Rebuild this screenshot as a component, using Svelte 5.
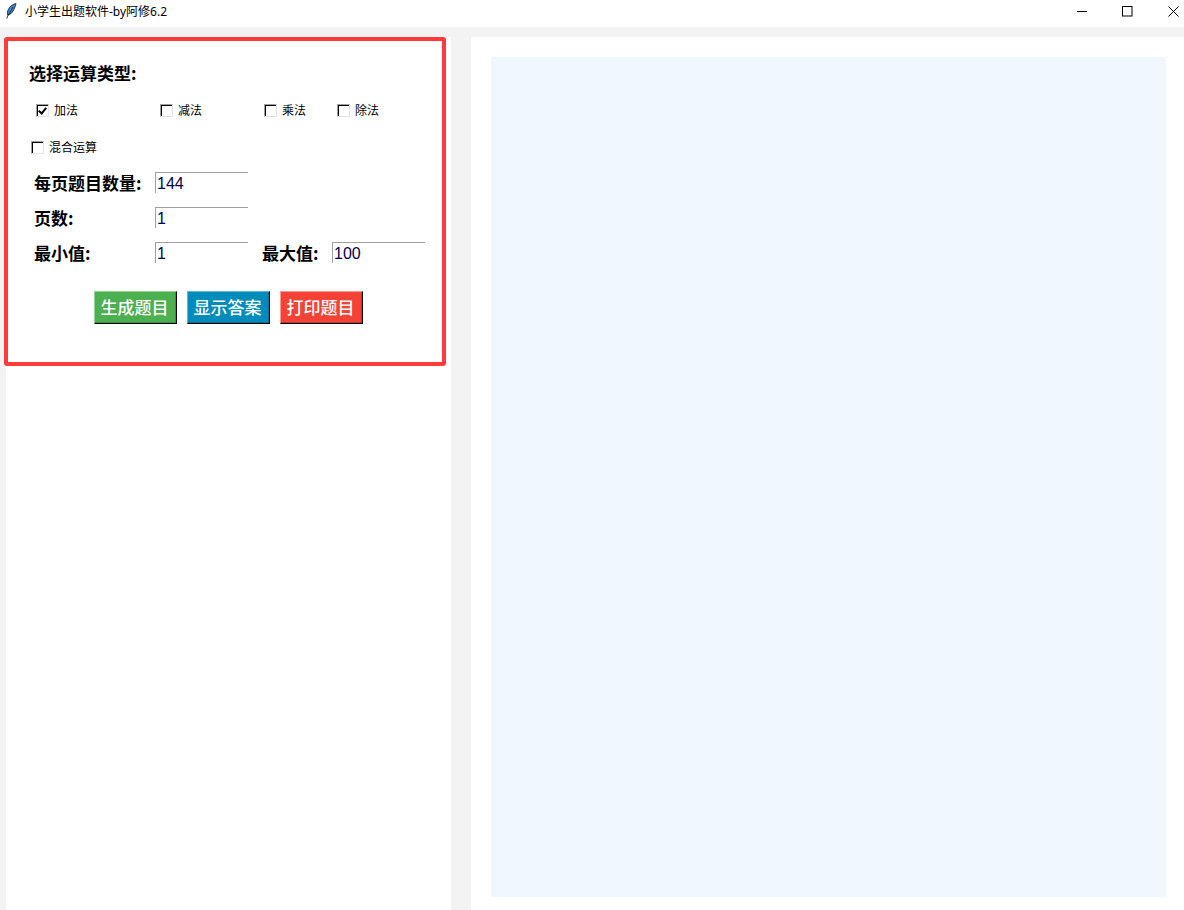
<script>
  // Question generator settings: operation types, page counts and value range.
  const firstRow = [
    { name: '加法', width: 124, checked: true },
    { name: '减法', width: 104, checked: false },
    { name: '乘法', width: 73, checked: false },
    { name: '除法', width: 73, checked: false },
  ];

  let ops = $state(firstRow);
  let mixed = $state(false);
  let perPage = $state('144');
  let pages = $state('1');
  let min = $state('1');
  let max = $state('100');
</script>

<div class="window">
  <header class="titlebar">
    <svg class="feather" width="12" height="16" viewBox="0 0 12 16" aria-hidden="true">
      <path d="M11 0.6C8 1.2 4.6 3.4 3.2 6.8 2.4 8.6 2.2 10.4 2.8 12.2 5 11.8 6.8 10.2 8 8 9.4 5.6 10.6 3 11 0.6Z" fill="#3f86c8" stroke="#12283a" stroke-width="0.9" stroke-linejoin="round" />
      <path d="M8.2 4 2.6 13.2 1.8 15.6" stroke="#12283a" stroke-width="0.9" fill="none" />
    </svg>
    <span class="app-title">小学生出题软件-by阿修6.2</span>
    <div class="controls">
      <svg width="10" height="10" viewBox="0 0 10 10" aria-hidden="true"><path d="M0 5.5H10" stroke="#000" /></svg>
      <svg width="11" height="11" viewBox="0 0 11 11" aria-hidden="true"><rect x="0.5" y="0.5" width="9.5" height="9.5" fill="none" stroke="#000" /></svg>
      <svg width="11" height="11" viewBox="0 0 11 11" aria-hidden="true"><path d="M0.5 0.5 10.5 10.5M10.5 0.5 0.5 10.5" stroke="#000" /></svg>
    </div>
  </header>

  <main class="body">
    <section class="left">
      <div class="frame">
        <h2 class="heading">选择运算类型:</h2>

        <div class="ops">
          {#each ops as op}
            <label class="check" style="width: {op.width}px">
              <input type="checkbox" bind:checked={op.checked} />
              <span>{op.name}</span>
            </label>
          {/each}
        </div>

        <label class="check mixed">
          <input type="checkbox" bind:checked={mixed} />
          <span>混合运算</span>
        </label>

        <div class="fields">
          <div class="row">
            <span class="label">每页题目数量:</span>
            <input class="num" bind:value={perPage} />
          </div>
          <div class="row">
            <span class="label">页数:</span>
            <input class="num" bind:value={pages} />
          </div>
          <div class="row">
            <span class="label">最小值:</span>
            <input class="num" bind:value={min} />
            <span class="label second">最大值:</span>
            <input class="num" bind:value={max} />
          </div>
        </div>

        <div class="actions">
          <button type="button" class="btn green">生成题目</button>
          <button type="button" class="btn blue">显示答案</button>
          <button type="button" class="btn red">打印题目</button>
        </div>
      </div>
    </section>

    <section class="right">
      <div class="sheet"></div>
    </section>
  </main>
</div>

<style>
  :global(body) { margin: 0; background: #f3f3f3; }

  .window {
    width: 1184px; height: 910px; overflow: hidden; display: flex; flex-direction: column;
    font-family: "Noto Sans CJK SC", "Liberation Sans", sans-serif; color: #000;
  }

  .titlebar { height: 27px; flex: none; display: flex; align-items: center; background: #fff; padding-left: 5px; box-sizing: border-box; }
  .feather { flex: none; margin-top: -5px; }
  .app-title { margin-left: 8px; margin-top: -3px; font-size: 12px; line-height: 16px; font-family: "Noto Sans", "Noto Sans CJK SC", sans-serif; }
  .controls { margin-left: auto; display: flex; align-items: flex-start; margin-top: -5px; padding-right: 5px; }
  .controls svg { display: block; }
  .controls svg:nth-child(1) { margin-right: 35px; }
  .controls svg:nth-child(2) { margin-right: 35px; }

  .body { flex: 1; display: flex; padding-top: 10px; padding-left: 6px; gap: 20px; min-height: 0; }

  .left { width: 445px; flex: none; background: #fff; }
  .frame {
    margin-left: -2px; width: 442px; height: 329px; box-sizing: border-box;
    border: 4px solid #ff3b3b; border-radius: 3px; background: #fff;
    padding: 22px 0 0 21px;
  }

  .heading { margin: 0; font-size: 17px; line-height: 20px; font-weight: 700; }

  .ops { display: flex; margin: 19px 0 0 7px; }
  .check { display: flex; align-items: center; gap: 5px; font-size: 12px; line-height: 16px; flex: none; }
  .mixed { margin: 21px 0 0 2px; }

  .check input {
    appearance: none; width: 13px; height: 13px; margin: 0; flex: none; box-sizing: border-box; background: #fff;
    border: 1px solid; border-color: #a0a0a0 #e3e3e3 #e3e3e3 #a0a0a0;
    box-shadow: inset 1px 1px 0 #000; position: relative;
  }
  .check input:checked::after {
    content: ''; position: absolute; left: 3px; top: 1px; width: 3px; height: 6px;
    border: solid #000; border-width: 0 2px 2px 0; transform: rotate(40deg);
  }

  .fields { display: flex; flex-direction: column; gap: 14px; margin: 17px 0 0 5px; }
  .row { display: flex; align-items: center; height: 21px; }
  .label { width: 121px; flex: none; font-size: 17px; line-height: 21px; font-weight: 700; }
  .label.second { width: 70px; margin-left: 14px; }

  .num {
    width: 93px; height: 21px; box-sizing: border-box; flex: none; padding: 2px 0 0 1px; margin: 0; outline: none;
    border: solid #a0a0a0; border-width: 1px 0 0 1px; background: #fff; border-radius: 0;
    font: 16px/18px "Liberation Sans", sans-serif; color: #00004a;
  }

  .actions { display: flex; gap: 10px; margin: 28px 0 0 65px; }
  .btn {
    width: 83px; height: 33px; box-sizing: border-box; padding: 0 2px 1px 0; margin: 0; cursor: pointer;
    border: 1px solid #000; border-top-color: var(--hi); border-left-color: var(--hi);
    background: var(--bg); color: #fff; font: 500 17px/20px "Noto Sans CJK SC", sans-serif;
    box-shadow: inset -1px -1px 0 var(--lo);
  }
  .green { --bg: #4caf50; --hi: #8fd692; --lo: #3d8c40; }
  .blue { --bg: #008cba; --hi: #5cb8d8; --lo: #007095; }
  .red { --bg: #f44336; --hi: #fb9a93; --lo: #c3362b; }

  .right { flex: 1; background: #fff; padding: 20px 18px 13px 20px; min-width: 0; display: flex; }
  .sheet { flex: 1; background: #f0f7ff; }
</style>
